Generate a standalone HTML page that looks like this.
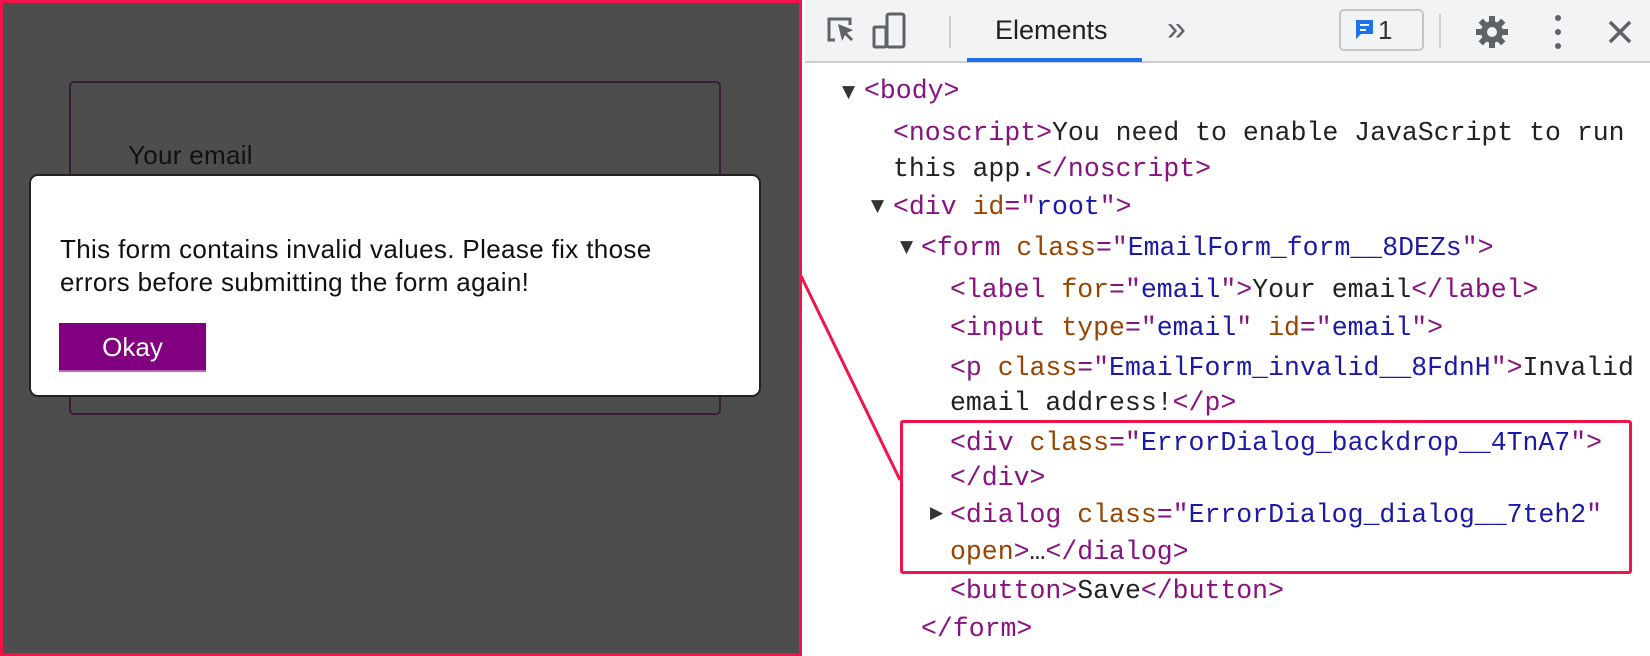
<!DOCTYPE html>
<html><head><meta charset="utf-8"><style>
*{margin:0;padding:0;box-sizing:border-box}
body{width:1650px;height:656px;overflow:hidden;background:#fff;position:relative;font-family:"Liberation Sans",sans-serif}
#left{position:absolute;left:0;top:0;width:802px;height:656px;background:#4d4d4d;border:3px solid #f0144a}
#form{position:absolute;left:66px;top:78px;width:652px;height:334px;border:2px solid #3a1c3a;border-radius:5px}
#lbl{position:absolute;left:125px;top:137px;font-size:26px;letter-spacing:0.3px;color:#111}
#dlg{position:absolute;left:26px;top:171px;width:732px;height:223px;background:#fff;border:2px solid #222;border-radius:9px}
#dlg p{position:absolute;left:29px;top:57px;font-size:26px;line-height:33px;letter-spacing:0.35px;color:#111;white-space:nowrap}
#ok{position:absolute;left:28px;top:147px;width:147px;height:49px;background:#800080;color:#fff;font-size:26px;text-align:center;line-height:49px;border-bottom:2px solid #c060c0}
#tb{position:absolute;left:805px;top:0;width:845px;height:63px;background:#f1f3f4;border-bottom:2px solid #cbcdd1}
#code{position:absolute;left:0;top:0;font-family:"Liberation Mono",monospace;font-size:26.5px;color:#222}
.l{position:absolute;white-space:pre;line-height:38px}
.t{color:#881280}.a{color:#994500}.v{color:#1a1aa6}
.tri{position:absolute;font-size:17px;color:#333;font-family:"DejaVu Sans",sans-serif}
#hl{position:absolute;left:900px;top:420px;width:732px;height:154px;border:3px solid #f0144a;border-radius:3px}
</style></head><body>
<div id="left">
<div id="form"></div>
<div id="lbl">Your email</div>
<div id="dlg"><p>This form contains invalid values. Please fix those<br>errors before submitting the form again!</p><div id="ok">Okay</div></div>
</div>
<div id="tb">
<svg width="845" height="63" style="position:absolute;left:0;top:0">
<path d="M30 40 h-6 v-21 h21 v6" fill="none" stroke="#5f6368" stroke-width="3"/>
<path d="M33 24 l4 17 l3-6 l6 6 l2-2 l-6-6 l6-3 z" fill="#5f6368"/>
<rect x="82" y="14" width="17" height="33" rx="2" fill="none" stroke="#5f6368" stroke-width="3"/>
<rect x="69" y="27" width="12" height="20" rx="1" fill="none" stroke="#5f6368" stroke-width="3"/>
<line x1="145" y1="16" x2="145" y2="48" stroke="#cbcdd1" stroke-width="2"/>
<rect x="162" y="58" width="175" height="4" fill="#1a73e8"/>
<rect x="535" y="10" width="83" height="40" rx="4" fill="#f1f3f4" stroke="#c4c7ca" stroke-width="2"/>
<path d="M551 20 h17 v14 h-12 l-5 5 z" fill="#1a73e8"/>
<rect x="555" y="24" width="9" height="2" fill="#fff"/><rect x="555" y="29" width="6" height="2" fill="#fff"/>
<line x1="635" y1="14" x2="635" y2="48" stroke="#cbcdd1" stroke-width="2"/>
<g transform="translate(687,32)" fill="#5f6368"><circle r="11"/><g><rect x="-3" y="-16" width="6" height="32"/><rect x="-3" y="-16" width="6" height="32" transform="rotate(45)"/><rect x="-3" y="-16" width="6" height="32" transform="rotate(90)"/><rect x="-3" y="-16" width="6" height="32" transform="rotate(135)"/></g><circle r="5" fill="#f1f3f4"/></g>
<circle cx="753" cy="18" r="3" fill="#5f6368"/><circle cx="753" cy="32" r="3" fill="#5f6368"/><circle cx="753" cy="46" r="3" fill="#5f6368"/>
<path d="M805 22 l20 20 M825 22 l-20 20" stroke="#5f6368" stroke-width="3.5"/>
</svg>
<div style="position:absolute;left:190px;top:15px;font-size:27px;color:#202124">Elements</div>
<div style="position:absolute;left:362px;top:10px;font-size:34px;color:#5f6368">»</div>
<div style="position:absolute;left:573px;top:15px;font-size:26px;color:#333">1</div>
</div>
<svg width="1650" height="656" style="position:absolute;left:0;top:0"><line x1="801" y1="276" x2="900" y2="480" stroke="#f0144a" stroke-width="3"/></svg>
<div id="code">
<div class="tri" style="left:842px;top:82px">▼</div>
<div class="l" style="left:864px;top:72px"><span class="t">&lt;body&gt;</span></div>
<div class="l" style="left:893px;top:114px"><span class="t">&lt;noscript&gt;</span>You need to enable JavaScript to run</div>
<div class="l" style="left:893px;top:150px">this app.<span class="t">&lt;/noscript&gt;</span></div>
<div class="tri" style="left:871px;top:196px">▼</div>
<div class="l" style="left:893px;top:188px"><span class="t">&lt;div </span><span class="a">id</span><span class="t">="</span><span class="v">root</span><span class="t">"&gt;</span></div>
<div class="tri" style="left:900px;top:237px">▼</div>
<div class="l" style="left:921px;top:229px"><span class="t">&lt;form </span><span class="a">class</span><span class="t">="</span><span class="v">EmailForm_form__8DEZs</span><span class="t">"&gt;</span></div>
<div class="l" style="left:950px;top:271px"><span class="t">&lt;label </span><span class="a">for</span><span class="t">="</span><span class="v">email</span><span class="t">"&gt;</span>Your email<span class="t">&lt;/label&gt;</span></div>
<div class="l" style="left:950px;top:309px"><span class="t">&lt;input </span><span class="a">type</span><span class="t">="</span><span class="v">email</span><span class="t">" </span><span class="a">id</span><span class="t">="</span><span class="v">email</span><span class="t">"&gt;</span></div>
<div class="l" style="left:950px;top:349px"><span class="t">&lt;p </span><span class="a">class</span><span class="t">="</span><span class="v">EmailForm_invalid__8FdnH</span><span class="t">"&gt;</span>Invalid</div>
<div class="l" style="left:950px;top:384px">email address!<span class="t">&lt;/p&gt;</span></div>
<div class="l" style="left:950px;top:424px"><span class="t">&lt;div </span><span class="a">class</span><span class="t">="</span><span class="v">ErrorDialog_backdrop__4TnA7</span><span class="t">"&gt;</span></div>
<div class="l" style="left:950px;top:459px"><span class="t">&lt;/div&gt;</span></div>
<div class="tri" style="left:930px;top:503px">▶</div>
<div class="l" style="left:950px;top:496px"><span class="t">&lt;dialog </span><span class="a">class</span><span class="t">="</span><span class="v">ErrorDialog_dialog__7teh2</span><span class="t">"</span></div>
<div class="l" style="left:950px;top:533px"><span class="a">open</span><span class="t">&gt;</span>…<span class="t">&lt;/dialog&gt;</span></div>
<div class="l" style="left:950px;top:572px"><span class="t">&lt;button&gt;</span>Save<span class="t">&lt;/button&gt;</span></div>
<div class="l" style="left:921px;top:610px"><span class="t">&lt;/form&gt;</span></div>
</div>
<div id="hl"></div>
</body></html>
